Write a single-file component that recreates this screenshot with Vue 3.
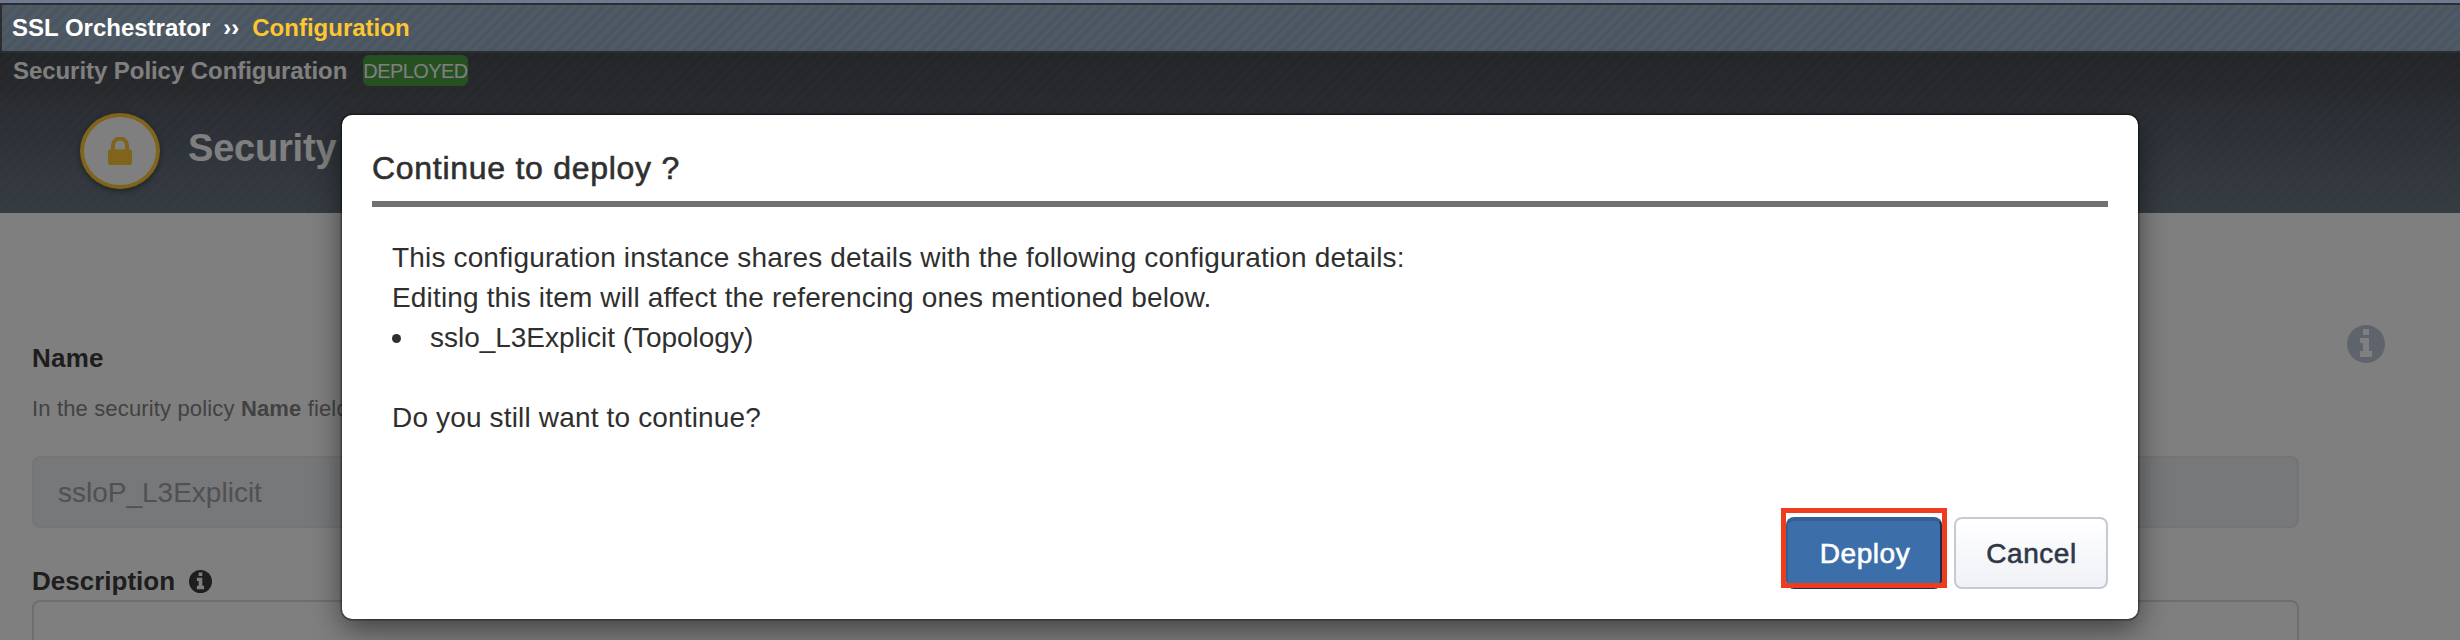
<script setup>
const messages = [
  'This configuration instance shares details with the following configuration details:',
  'Editing this item will affect the referencing ones mentioned below.'
]
const references = ['sslo_L3Explicit (Topology)']
</script>

<template>
  <div class="page">
    <div class="strip"></div>
    <nav class="crumbs">
      <span>SSL Orchestrator</span>
      <span class="sep">››</span>
      <span class="current">Configuration</span>
    </nav>

    <div class="content">
      <header class="hero">
        <div class="status">
          <span class="status-title">Security Policy Configuration</span>
          <span class="badge">DEPLOYED</span>
        </div>
        <div class="headline">
          <div class="emblem">
            <svg width="24" height="28" viewBox="0 0 24 28">
              <path d="M5 15V8.500a7 7 0 0 1 14 0V15" fill="none" stroke="#fec834" stroke-width="4" />
              <rect x="0" y="12.500" width="24" height="15.500" rx="2" fill="#fec834" />
            </svg>
          </div>
          <h1>Security</h1>
        </div>
      </header>

      <main class="form">
        <div class="fields">
          <label class="label">Name</label>
          <p class="hint">In the security policy <b>Name</b> field</p>
          <div class="input">ssloP_L3Explicit</div>
          <div class="label desc">
            Description
            <svg width="23" height="23" viewBox="0 0 38 38">
              <circle cx="19" cy="19" r="19" fill="#3c3c3c" />
              <path d="M16 4h6v6h-6zM13 13h9v13h3v6H13v-6h3v-8h-3z" fill="#fff" />
            </svg>
          </div>
          <div class="textarea"></div>
        </div>
        <svg class="help" width="38" height="38" viewBox="0 0 38 38">
          <circle cx="19" cy="19" r="19" fill="#bfc8d8" />
          <path d="M16 4h6v6h-6zM13 13h9v13h3v6H13v-6h3v-8h-3z" fill="#fff" />
        </svg>
      </main>
      <div class="shade"></div>
    </div>

    <section class="modal">
      <h2>Continue to deploy ?</h2>
      <div class="body">
        <p v-for="m in messages" :key="m">{{ m }}</p>
        <ul>
          <li v-for="r in references" :key="r">{{ r }}</li>
        </ul>
        <p class="question">Do you still want to continue?</p>
      </div>
      <footer>
        <div class="marked">
          <button class="btn primary">Deploy</button>
          <div class="mark"></div>
        </div>
        <button class="btn">Cancel</button>
      </footer>
    </section>
  </div>
</template>

<style>
body { margin: 0; background: #808080; }
</style>

<style scoped>
* { box-sizing: border-box; }
.page {
  position: relative;
  width: 2460px;
  height: 640px;
  overflow: hidden;
  display: flex;
  flex-direction: column;
  font-family: "Liberation Sans", Arial, sans-serif;
}
h1, h2, p, ul { margin: 0; padding: 0; }
.strip { height: 3px; flex: none; background: #6c7b92; }
.crumbs {
  height: 50px;
  flex: none;
  display: flex;
  align-items: center;
  padding: 0 0 1px 10px;
  border: 2px solid #2d2d2d;
  border-right: 0;
  background: repeating-linear-gradient(135deg, #4b5663 0 4px, #4f5a64 4px 8px);
  color: #fff;
  font-size: 24px;
  line-height: 28px;
  font-weight: bold;
}
.sep { margin: 0 13px 0 13px; }
.current { color: #fec62f; }
.content { position: relative; flex: 1; background: #fff; }
.shade { position: absolute; inset: 0; background: rgba(0, 0, 0, 0.5); }
.hero {
  height: 160px;
  background:
    repeating-linear-gradient(135deg, rgba(255, 255, 255, 0) 0 4px, rgba(255, 255, 255, 0.025) 4px 8px),
    linear-gradient(#464b50 0, #4c5056 20%, #565d69 40%, #616c78 70%, #697783 100%);
  color: #fff;
}
.status { display: flex; align-items: flex-start; padding: 2px 0 0 13px; height: 34px; }
.status-title { font-size: 24px; font-weight: bold; line-height: 31px; width: 350px; letter-spacing: -0.06px; }
.badge {
  width: 105px;
  height: 31px;
  border-radius: 6px;
  background: #4da045;
  text-align: center;
  font-size: 20px;
  line-height: 32px;
  letter-spacing: -0.55px;
  white-space: nowrap;
}
.headline { display: flex; align-items: flex-start; padding: 26px 0 0 80px; }
.emblem {
  width: 80px;
  height: 76px;
  border: 4px solid #fec834;
  border-radius: 50%;
  background: #fff;
  display: flex;
  align-items: center;
  justify-content: center;
  box-shadow: 0 2px 6px rgba(0, 0, 0, 0.4);
}
h1 { margin-left: 28px; font-size: 38px; line-height: 70px; letter-spacing: -0.2px; }
.form { display: flex; padding: 0 0 0 32px; }
.fields { width: 2267px; padding-top: 130px; }
.label { display: block; color: #3c3c3c; font-size: 26px; line-height: 30px; font-weight: bold; letter-spacing: 0.2px; }
.hint { margin-top: 23px; font-size: 22px; line-height: 26px; color: #858585; letter-spacing: 0.15px; }
.input {
  margin-top: 34px;
  height: 72px;
  border: 2px solid #e6e8ec;
  border-radius: 8px;
  background: #eef0f3;
  padding-left: 24px;
  font-size: 28px;
  line-height: 69px;
  color: #a0a2a6;
}
.desc { display: flex; align-items: center; margin-top: 38px; letter-spacing: 0; }
.desc svg { margin-left: 14px; }
.textarea { margin-top: 4px; height: 120px; border: 2px solid #dcdce4; border-radius: 8px; }
.help { margin: 112px 0 0 48px; }

.modal {
  position: absolute;
  left: 342px;
  top: 115px;
  width: 1796px;
  height: 504px;
  padding: 30px 30px;
  display: flex;
  flex-direction: column;
  border-radius: 10px;
  background: #fff;
  color: #2f2f2f;
  box-shadow: 0 0 0 1.5px rgba(0, 0, 0, 0.35), 0 10px 30px rgba(0, 0, 0, 0.5);
}
h2 {
  height: 62px;
  padding-top: 3px;
  border-bottom: 6px solid #717171;
  font-size: 32px;
  line-height: 40px;
  font-weight: normal;
  letter-spacing: 0.72px;
  -webkit-text-stroke: 0.6px #2f2f2f;
}
.body { flex: 1; padding: 31px 20px 0; font-size: 28px; line-height: 40px; letter-spacing: 0.16px; }
ul { list-style: none; }
li { display: flex; align-items: center; letter-spacing: -0.02px; }
li::before { content: ""; width: 9px; height: 9px; border-radius: 50%; background: #2f2f2f; margin-right: 29px; }
.question { margin-top: 40px; }
footer { display: flex; justify-content: flex-end; gap: 12px; }
.btn {
  width: 154px;
  height: 72px;
  padding: 2px 0 0 1px;
  border: 2px solid #c6c8d3;
  border-radius: 8px;
  background: linear-gradient(#fff, #eff1f6);
  color: #2f3747;
  font-family: inherit;
  font-size: 28px;
  letter-spacing: 0.55px;
  -webkit-text-stroke: 0.6px currentColor;
}
.marked { position: relative; display: flex; }
.primary {
  width: 156px;
  border-color: #345f92 #1f2c45 #1f2c45 #345f92;
  border-top-width: 4px;
  padding: 0 0 0 2px;
  background: #3c6eaa;
  color: #fff;
}
.mark { position: absolute; left: -5px; top: -9px; width: 166px; height: 80px; border: 5px solid #ee3d1c; }
</style>
